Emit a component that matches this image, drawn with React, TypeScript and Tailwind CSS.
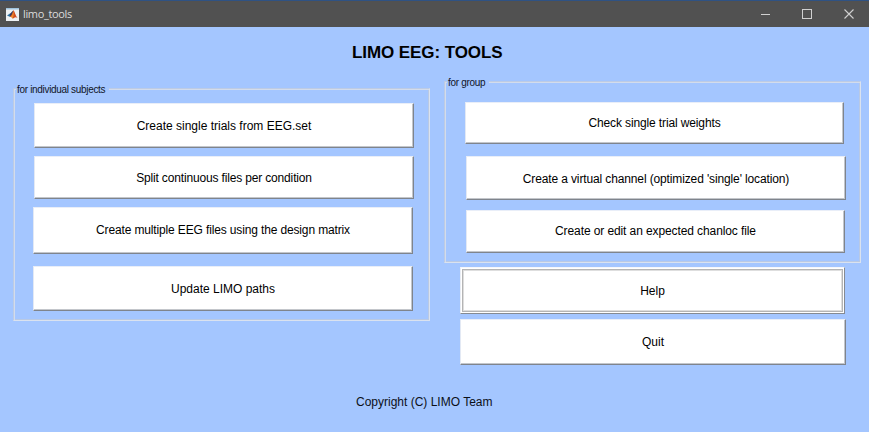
import type { ReactNode } from "react";

function ToolButton({ className, textClass = "", children }: { className: string; textClass?: string; children: ReactNode }) {
  return (
    <button
      className={`flex shrink-0 items-center justify-center border border-t-[#e9eef8] border-l-[#e3e9f4] border-r-[#7f848c] border-b-[#7f848c] bg-white text-[12px] leading-[14px] text-black whitespace-nowrap shadow-[inset_-1px_-1px_0_#c3c6cb] ${className}`}
    >
      <span className={textClass}>{children}</span>
    </button>
  );
}

function Group({ title, className, children }: { title: string; className: string; children: ReactNode }) {
  return (
    <fieldset
      className={`flex min-w-0 flex-col border border-t-[#bccbe5] border-l-[#bccbe5] border-r-[#dae2ef] border-b-[#dae2ef] pr-px pb-px shadow-[inset_1px_1px_0_#d3dcec,inset_-1px_-1px_0_#b9c9e4] ${className}`}
    >
      <legend className="ml-[2px] h-[11px] bg-[#a4c6ff] pr-[4px] pl-px text-[10px] leading-[13px] tracking-[-0.32px] text-[#10151f] whitespace-nowrap">{title}</legend>
      {children}
    </fieldset>
  );
}

function TitleBar() {
  return (
    <header className="flex h-[27px] items-center border-t border-t-[#2f5283] bg-[#515151] pl-[6px]">
      <svg width="13" height="13" viewBox="0 0 13 13" className="shrink-0">
        <rect width="13" height="13" fill="#eef1f4" />
        <rect width="13" height="1.5" fill="#9fc3dc" />
        <path d="M1 7.6 L4 5.6 L5.8 6.2 L3.8 8.8 Z" fill="#2c6f9e" />
        <path d="M4 5.7 L7.4 2.2 L6.4 7 L3.9 9 Z" fill="#343a5c" />
        <path d="M7.4 2.2 C8.7 3.2 9.2 7 11.6 10 C9.8 8.7 8.4 9 6.8 10.8 C6.2 9.5 5.3 8.8 3.8 8.8 C5.7 7.4 6.6 4.8 7.4 2.2 Z" fill="#d34b1d" />
        <path d="M7.4 2.8 C7.8 5.5 8 7.4 6.8 10.5 C6.4 9.6 5.7 9 4.8 8.7 C6.5 7.5 7 5 7.4 2.8 Z" fill="#ed8b2c" />
      </svg>
      <span className="ml-[4px] font-['Open_Sans','Noto_Sans',sans-serif] text-[11px] leading-[14px] tracking-[-0.35px] text-[#dcdcdc]">limo_tools</span>
      <svg width="108" height="26" viewBox="0 0 108 26" className="ml-auto shrink-0" fill="none" stroke="#d0d0d0">
        <path d="M0 13.5 H9" />
        <rect x="41.5" y="8.5" width="9" height="9" />
        <path d="M83.5 8.5 L92.5 17.5 M92.5 8.5 L83.5 17.5" strokeWidth="1.1" />
      </svg>
    </header>
  );
}

export default function App() {
  return (
    <div className="flex h-[432px] w-[869px] flex-col overflow-hidden bg-[#a4c6ff] font-['Liberation_Sans',Arial,sans-serif]">
      <TitleBar />
      <h1 className="mt-[16px] ml-[352px] h-[20px] text-[17px] leading-[20px] font-bold tracking-[-0.08px] whitespace-nowrap text-black">LIMO EEG: TOOLS</h1>
      <main className="flex h-[302px] items-start">
        <Group title="for individual subjects" className="mt-[20px] ml-[13px] h-[238px] w-[417px]">
          <ToolButton className="mt-[9px] ml-[20px] h-[45px] w-[380px]">Create single trials from EEG.set</ToolButton>
          <ToolButton className="mt-[8px] ml-[20px] h-[43px] w-[380px]" textClass="tracking-[-0.16px]">Split continuous files per condition</ToolButton>
          <ToolButton className="mt-[8px] ml-[19px] h-[47px] w-[380px] pb-[2px]" textClass="tracking-[-0.14px]">Create multiple EEG files using the design matrix</ToolButton>
          <ToolButton className="mt-[12px] ml-[19px] h-[45px] w-[380px]">Update LIMO paths</ToolButton>
        </Group>
        <section className="ml-[14px] flex flex-col">
          <Group title="for group" className="mt-[13px] h-[187px] w-[417px]">
            <ToolButton className="mt-[15px] ml-[20px] h-[42px] w-[379px]" textClass="tracking-[-0.13px]">Check single trial weights</ToolButton>
            <ToolButton className="mt-[12px] ml-[21px] h-[44px] w-[380px] pt-px" textClass="tracking-[-0.13px]">Create a virtual channel (optimized 'single' location)</ToolButton>
            <ToolButton className="mt-[10px] ml-[21px] h-[43px] w-[379px] pb-px" textClass="tracking-[-0.1px]">Create or edit an expected chanloc file</ToolButton>
          </Group>
          <button className="mt-[4px] ml-[16px] h-[47px] w-[385px] border border-t-[#f4f6fa] border-l-[#e9edf4] border-r-[#858a92] border-b-[#858a92] bg-white p-px text-[12px] leading-[14px] text-black">
            <span className="flex h-full items-center justify-center border border-[#b4b4b4] pt-px shadow-[inset_0_0_0_1px_#dedede]">Help</span>
          </button>
          <ToolButton className="mt-[5px] ml-[16px] h-[46px] w-[386px]">Quit</ToolButton>
        </section>
      </main>
      <footer className="mt-[29px] ml-[356px] text-[12px] leading-[16px] whitespace-nowrap text-[#0c1018]">Copyright (C) LIMO Team</footer>
    </div>
  );
}
